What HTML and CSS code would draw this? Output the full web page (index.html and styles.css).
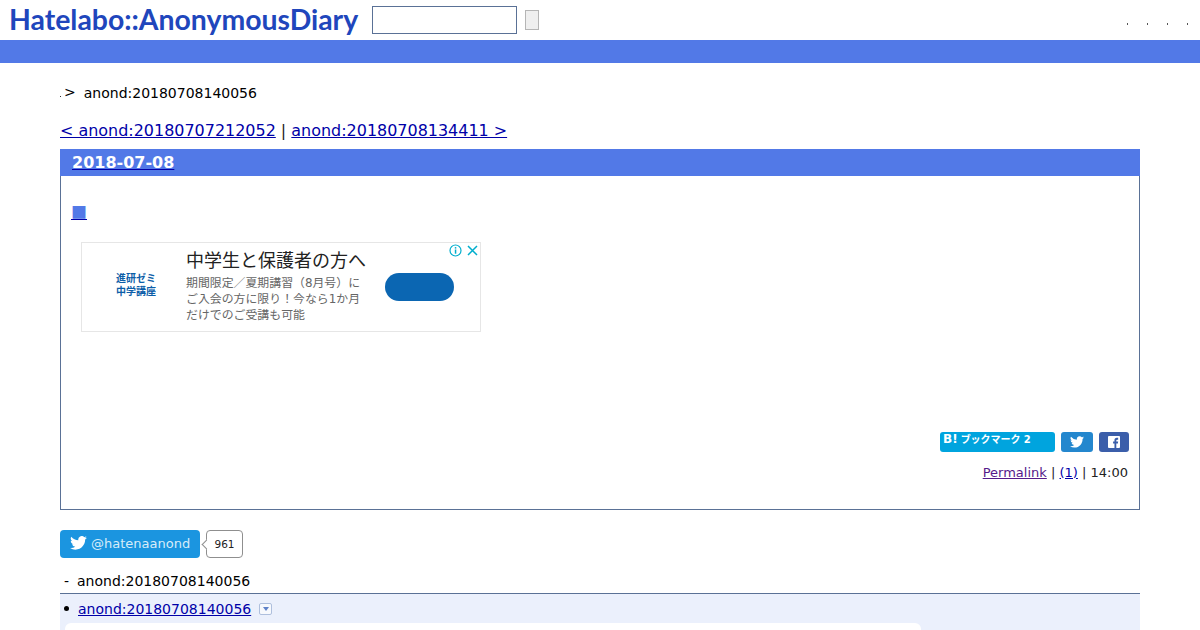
FILE: index.html
```html
<!DOCTYPE html>
<html lang="ja">
<head>
    <meta charset="utf-8">
    <title>anond:20180708140056</title>
    <link rel="stylesheet" href="styles.css">
</head>
<body>
    <div class="header">
        <a class="logo">Hatelabo::AnonymousDiary</a>
        <input class="search-box" type="text">
        <button class="search-btn"></button>
        <div class="header-links">
            <span class="dot"></span>
            <span class="dot"></span>
            <span class="dot"></span>
            <span class="dot"></span>
        </div>
    </div>
    <div class="nav"></div>

    <div class="content">
        <div class="crumb"><span class="crumb-dot"></span><span class="crumb-arrow">&gt;</span><span>anond:20180708140056</span></div>
        <div class="pager"><a href="#">&lt; anond:20180707212052</a> | <a href="#">anond:20180708134411 &gt;</a></div>

        <div class="day">
            <h2 class="day-title"><a href="#">2018-07-08</a></h2>
            <div class="section">
                <a class="square" href="#">■</a>
                <div class="ad">
                    <div class="ad-logo">進研ゼミ<br>中学講座</div>
                    <div class="ad-text">
                        <div class="ad-title">中学生と保護者の方へ</div>
                        <div class="ad-body">期間限定／夏期講習（8月号）にご入会の方に限り！今なら1か月だけでのご受講も可能</div>
                    </div>
                    <div class="ad-btn"></div>
                    <div class="ad-marks">
                        <svg width="13" height="13" viewBox="0 0 13 13"><circle cx="6.5" cy="6.5" r="5.500" fill="none" stroke="#00aecd" stroke-width="1.200"/><rect x="5.800" y="5.500" width="1.500" height="4.200" fill="#00aecd"/><rect x="5.800" y="3.100" width="1.500" height="1.500" fill="#00aecd"/></svg>
                        <svg width="13" height="13" viewBox="0 0 13 13"><path d="M2 2l9 9M11 2l-9 9" stroke="#00aecd" stroke-width="1.500"/></svg>
                    </div>
                </div>
                <div class="share">
                    <a class="share-hatena"><b>B!</b><span>ブックマーク</span><span>2</span></a>
                    <a class="share-tw">
                        <svg width="14" height="12" viewBox="0 0 24 20"><path fill="#fff" d="M24 2.400a9.800 9.800 0 0 1-2.800.8A4.900 4.900 0 0 0 23.300.5a9.800 9.800 0 0 1-3.100 1.200A4.900 4.900 0 0 0 11.800 6.100 13.900 13.900 0 0 1 1.700.9a4.900 4.900 0 0 0 1.500 6.500A4.900 4.900 0 0 1 1 6.800v.1a4.900 4.900 0 0 0 3.900 4.800 4.900 4.900 0 0 1-2.200.1 4.900 4.900 0 0 0 4.600 3.400A9.900 9.900 0 0 1 0 17.200 13.900 13.900 0 0 0 7.500 19.500c9.100 0 14-7.500 14-14v-.6A10 10 0 0 0 24 2.400z"/></svg>
                    </a>
                    <a class="share-fb">
                        <svg width="12" height="12" viewBox="0 0 13 13"><path fill="#fff" fill-rule="evenodd" d="M1 0h11a1 1 0 0 1 1 1v11a1 1 0 0 1-1 1H9V8h1.700l.3-2H9V5c0-.6.3-1 1-1h1V2H9.500C7.800 2 7 3.100 7 4.600V6H5.500v2H7v5H1a1 1 0 0 1-1-1V1a1 1 0 0 1 1-1z"/></svg>
                    </a>
                </div>
                <div class="footer-line"><a class="visited" href="#">Permalink</a> | <a href="#">(1)</a> | 14:00</div>
            </div>
        </div>

        <div class="follow">
            <a class="tw-btn">
                <svg width="17" height="14" viewBox="0 0 24 20"><path fill="#fff" d="M24 2.400a9.800 9.800 0 0 1-2.800.8A4.900 4.900 0 0 0 23.300.5a9.800 9.800 0 0 1-3.100 1.200A4.900 4.900 0 0 0 11.800 6.100 13.900 13.900 0 0 1 1.700.9a4.900 4.900 0 0 0 1.500 6.500A4.900 4.900 0 0 1 1 6.800v.1a4.900 4.900 0 0 0 3.900 4.800 4.900 4.900 0 0 1-2.200.1 4.900 4.900 0 0 0 4.600 3.400A9.900 9.900 0 0 1 0 17.200 13.900 13.900 0 0 0 7.500 19.500c9.100 0 14-7.500 14-14v-.6A10 10 0 0 0 24 2.400z"/></svg>
                <span>@hatenaanond</span>
            </a>
            <span class="tw-count">961</span>
        </div>

        <div class="refer-title"><span class="refer-dash">-</span><span>anond:20180708140056</span></div>
        <div class="refer">
            <div class="refer-row">
                <span class="bullet"></span>
                <a href="#">anond:20180708140056</a>
                <span class="toggle"></span>
            </div>
            <div class="quote"></div>
        </div>
    </div>
</body>
</html>
```

FILE: styles.css
```css
html, body{
    height: 630px;
    overflow: hidden;
}
body{
    margin: 0;
    background-color: #fff;
    color: #000;
    font-family: "DejaVu Sans", "Noto Sans CJK JP", sans-serif;
}
a{
    color: #0000a8;
}

.header{
    height: 40px;
    display: flex;
    align-items: center;
}
.logo{
    margin-left: 9px;
    margin-top: -2px;
    width: 350px;
    font-family: "Lato", sans-serif;
    font-size: 28.4px;
    font-weight: 700;
    color: #2046bc;
    white-space: nowrap;
}
.search-box{
    box-sizing: border-box;
    width: 145px;
    height: 28px;
    margin: 0 0 0 13px;
    border: 1px solid #5a7196;
    background: #fff;
}
.search-btn{
    box-sizing: border-box;
    width: 14px;
    height: 20px;
    margin: 0 0 0 8px;
    padding: 0;
    border: 1px solid #b5b5b5;
    background: #efefef;
}
.header-links{
    margin-left: auto;
    margin-right: 12px;
    display: flex;
    gap: 19px;
    padding-top: 7px;
}
.dot{
    width: 1px;
    height: 2px;
    background: #555;
}
.nav{
    height: 23px;
    background-color: #5279e7;
}

.content{
    margin: 0 60px;
}
.crumb{
    display: flex;
    align-items: center;
    height: 20px;
    margin-top: 20px;
    font-size: 14px;
}
.crumb-dot{
    width: 1px;
    height: 1px;
    margin-top: 7px;
    margin-right: 3px;
    background: #333;
}
.crumb-arrow{
    margin-right: 8px;
    margin-top: -2px;
}
.pager{
    margin-top: 18px;
    font-size: 15.96px;
    line-height: 20px;
    color: #222;
}

.day{
    box-sizing: border-box;
    height: 361px;
    margin-top: 8px;
    border: 1px solid #5a7196;
    border-top: none;
}
.day-title{
    height: 27px;
    margin: 0 -1px;
    padding-left: 12px;
    background-color: #5279e7;
    font-size: 16px;
    line-height: 27px;
    font-weight: 700;
}
.day-title a{
    color: #fff;
    text-decoration-color: #0000a8;
}
.section{
    padding: 0 11px 0 10px;
}
.square{
    display: block;
    width: 16px;
    margin-top: 25px;
    height: 20px;
    font-family: "Noto Sans CJK JP", sans-serif;
    font-size: 16px;
    line-height: 20px;
    color: #5279e7;
    text-decoration-color: #0000a8;
}
.ad{
    position: relative;
    box-sizing: border-box;
    display: flex;
    width: 400px;
    height: 90px;
    margin: 21px 0 0 10px;
    border: 1px solid #e6e6e6;
}
.ad-logo{
    box-sizing: border-box;
    width: 104px;
    padding: 29px 0 0 4px;
    text-align: center;
    font-size: 10px;
    line-height: 13px;
    font-weight: 700;
    color: #0d5ea8;
}
.ad-text{
    width: 199px;
}
.ad-title{
    margin-top: 4px;
    font-size: 18px;
    line-height: 28px;
    color: #222;
    white-space: nowrap;
}
.ad-body{
    width: 178px;
    font-size: 11.9px;
    line-height: 16px;
    color: #666;
}
.ad-btn{
    width: 69px;
    height: 28px;
    margin-top: 30px;
    border-radius: 14px;
    background: #0b66b2;
}
.ad-marks{
    position: absolute;
    top: 1px;
    right: 1px;
    display: flex;
    gap: 4px;
}
.share{
    display: flex;
    justify-content: flex-end;
    gap: 6px;
    margin-top: 100px;
    margin-right: -1px;
}
.share a{
    height: 20px;
    border-radius: 3px;
    display: flex;
    align-items: center;
    justify-content: center;
}
.share .share-hatena{
    box-sizing: border-box;
    width: 115px;
    gap: 3px;
    background: #00a4de;
    color: #fff;
    font-size: 10px;
    font-weight: 700;
    line-height: 15px;
    padding: 0 0 5px 3px;
    white-space: nowrap;
    justify-content: flex-start;
}
.share-hatena b{
    font-size: 12px;
}
.share-tw{
    width: 32px;
    background: #2487ce;
}
.share-fb{
    width: 30px;
    background: #3b5eaa;
}
.footer-line{
    margin-top: 12px;
    text-align: right;
    font-size: 13px;
    line-height: 18px;
    color: #222;
}
.footer-line .visited{
    color: #551a8b;
}

.follow{
    display: flex;
    align-items: center;
    margin-top: 20px;
    height: 28px;
}
.tw-btn{
    box-sizing: border-box;
    width: 140px;
    height: 28px;
    display: flex;
    align-items: center;
    gap: 4px;
    padding: 0 0 2px 10px;
    border-radius: 4px;
    background: #1b95e0;
    color: #d7ecf9;
    font-size: 13px;
}
.tw-count{
    position: relative;
    box-sizing: border-box;
    height: 28px;
    margin-left: 6px;
    padding: 0 7.5px;
    border: 1px solid #8f8f8f;
    border-radius: 4px;
    font-size: 10.5px;
    line-height: 26px;
    color: #222;
}
.tw-count::before{
    content: "";
    position: absolute;
    left: -4px;
    top: 10px;
    width: 6px;
    height: 6px;
    background: #fff;
    border-left: 1px solid #8f8f8f;
    border-bottom: 1px solid #8f8f8f;
    transform: rotate(45deg);
}

.refer-title{
    display: flex;
    margin-top: 14px;
    padding-left: 4px;
    height: 21px;
    font-size: 14px;
    line-height: 19px;
}
.refer-dash{
    width: 13px;
}
.refer{
    height: 40px;
    border-top: 1px solid #5a7196;
    background: #ebf0fc;
}
.refer-row{
    display: flex;
    align-items: center;
    height: 29px;
    font-size: 14px;
}
.bullet{
    width: 5px;
    height: 5px;
    margin-left: 4px;
    margin-right: 9px;
    border-radius: 50%;
    background: #000;
}
.toggle{
    position: relative;
    box-sizing: border-box;
    width: 13px;
    height: 12px;
    margin-left: 8px;
    border: 1px solid #aebfdd;
    border-radius: 2px;
    background: #f7f9fd;
}
.toggle::after{
    content: "";
    position: absolute;
    left: 2.5px;
    top: 3px;
    border-left: 3px solid transparent;
    border-right: 3px solid transparent;
    border-top: 4px solid #5f82c9;
}
.quote{
    width: 856px;
    height: 20px;
    margin-left: 5px;
    border-radius: 6px 6px 0 0;
    background: #fff;
}
```
